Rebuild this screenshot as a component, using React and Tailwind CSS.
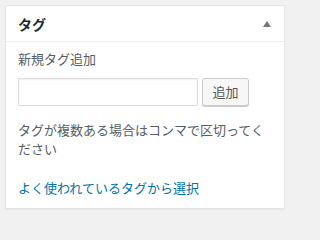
import React from 'react';

const jp = { fontFamily: '"Noto Sans CJK JP", "Noto Sans", sans-serif' };

export default function App() {
  return (
    <div className="w-full min-h-screen bg-[#f1f1f1] p-[5px]" style={jp}>
      <div className="w-[280px] h-[204px] bg-white border border-[#e5e5e5] shadow-[0_1px_1px_rgba(0,0,0,0.04)]">
        <div className="h-[36px] flex items-center justify-between pl-[12px] pr-[13px] border-b border-[#eeeeee]">
          <h2 className="text-[14px] font-bold text-[#23282d] leading-none">タグ</h2>
          <svg width="8" height="6" viewBox="0 0 8 6" aria-hidden="true">
            <polygon points="4,0 8,6 0,6" fill="#72777c" />
          </svg>
        </div>
        <div className="px-[12px] pt-[7px] text-[13px] text-[#555d66]">
          <p className="leading-[19px]">新規タグ追加</p>
          <div className="flex gap-[4px] mt-[10px]">
            <input
              type="text"
              className="w-[180px] h-[28px] border border-[#dddddd] bg-white shadow-[inset_0_1px_2px_rgba(0,0,0,0.07)] outline-none"
            />
            <button className="w-[47px] h-[28px] rounded-[3px] border border-[#cccccc] bg-[#f7f7f7] text-[#555555] text-[13px] shadow-[0_1px_0_#cccccc]">
              追加
            </button>
          </div>
          <p className="mt-[14px] leading-[19px]">タグが複数ある場合はコンマで区切ってください</p>
          <p className="mt-[20px] leading-[19px] text-[#0073aa]">よく使われているタグから選択</p>
        </div>
      </div>
    </div>
  );
}
